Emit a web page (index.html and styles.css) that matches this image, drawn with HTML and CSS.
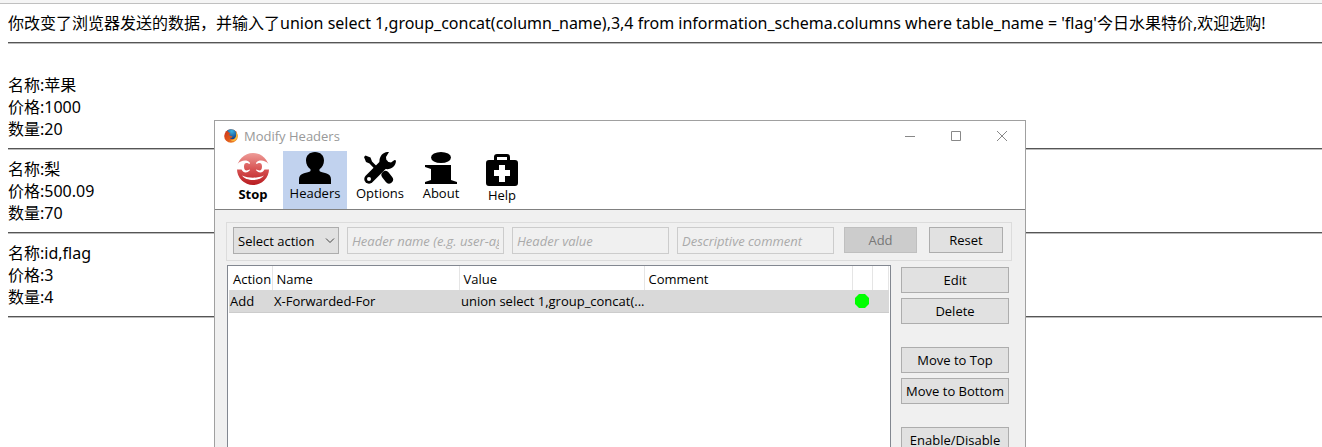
FILE: index.html
```html
<!DOCTYPE html>
<html lang="zh-CN">
<head>
<meta charset="utf-8">
<title>Modify Headers</title>
<link rel="stylesheet" href="styles.css">
</head>
<body>
<main class="page">
  <p class="line">你改变了浏览器发送的数据，并输入了<span class="query">union select 1,group_concat(column_name),3,4 from information_schema.columns where table_name = 'flag'</span>今日水果特价,欢迎选购!</p>
  <hr class="rule">
  <section class="item first">
    <p class="line">名称:苹果</p>
    <p class="line">价格:1000</p>
    <p class="line">数量:20</p>
  </section>
  <hr class="rule">
  <section class="item">
    <p class="line">名称:梨</p>
    <p class="line">价格:500.09</p>
    <p class="line">数量:70</p>
  </section>
  <hr class="rule">
  <section class="item">
    <p class="line">名称:id,flag</p>
    <p class="line">价格:3</p>
    <p class="line">数量:4</p>
  </section>
  <hr class="rule">
</main>

<div class="window" role="dialog" aria-labelledby="window-title">
  <header class="titlebar">
    <svg class="logo" viewBox="0 0 16 16" aria-hidden="true">
      <defs>
        <linearGradient id="fox" x1="0" y1="0" x2="1" y2="1">
          <stop offset="0" stop-color="#c8301c"/><stop offset=".55" stop-color="#e05a1c"/><stop offset="1" stop-color="#f8a030"/>
        </linearGradient>
        <radialGradient id="globe" cx=".5" cy=".2" r=".8">
          <stop offset="0" stop-color="#38b4e4"/><stop offset="1" stop-color="#123c80"/>
        </radialGradient>
      </defs>
      <circle cx="8" cy="8" r="7.8" fill="url(#fox)"/>
      <path d="M3.500 2C6-.3 11-.5 13.500 3c1.500 2.500 1 6.500-1.500 8-2 1-4.500.5-5.500-1 2 .5 3-.5 3.200-1.500L7 7.800 5.500 6.500 7.500 5 5 3.500Z" fill="url(#globe)"/>
      <path d="M13.500 3C15 7.500 13 12.500 7.500 13c3 1.800 7 .2 7.900-3.500C16 7 15 4.500 13.500 3Z" fill="#f9bd3c"/>
    </svg>
    <h1 class="title" id="window-title">Modify Headers</h1>
    <div class="controls">
      <button class="control" aria-label="Minimize"><svg viewBox="0 0 10 10"><path d="M0 5.500H10"/></svg></button>
      <button class="control" aria-label="Maximize"><svg viewBox="0 0 10 10"><path d="M.5.5h9v9h-9z"/></svg></button>
      <button class="control" aria-label="Close"><svg viewBox="0 0 10 10"><path d="M0 0 10 10M10 0 0 10"/></svg></button>
    </div>
  </header>

  <nav class="toolbar">
    <button class="tool stop">
      <svg class="icon" viewBox="0 0 32 32" aria-hidden="true">
        <defs><linearGradient id="red" gradientUnits="userSpaceOnUse" x1="0" y1="0" x2="0" y2="32"><stop offset="0" stop-color="#ee9c98"/><stop offset=".5" stop-color="#d85454"/><stop offset="1" stop-color="#b81c20"/></linearGradient></defs>
        <circle cx="16" cy="16" r="16" fill="url(#red)"/>
        <path d="M0 11.500C2.500 8.500 5 7.500 8 7.500c2 0 3.500.5 4.500 2h7c1-1.500 2.500-2 4.500-2 3 0 5.500 1 8 4v5h-4.500c-1 2-2.500 3-4 3-2 0-3-.8-4-2h-7c-1 1.200-2 2-4 2-1.500 0-3-1-4-3H0Z" fill="#fff"/>
        <path d="M7 13.500C7 11 8 10 9.500 10c1.500 0 2 .8 3.500.8V7h6v3.800c1.500 0 2-.8 3.500-.8 1.500 0 2.500 1 2.500 3.500s-1 4-2.500 4c-1.500 0-2-1-3.500-1V20h-6v-3.500c-1.500 0-2 1-3.500 1-1.500 0-2.500-1.500-2.500-4Z" fill="url(#red)"/>
        <path d="M5 22.500c7 3 15 3 22 0-4 6-18 6-22 0Z" fill="#fff"/>
      </svg>
      <span>Stop</span>
    </button>
    <button class="tool headers" aria-pressed="true">
      <svg class="icon" viewBox="0 0 32 32" aria-hidden="true"><path d="M16 0c5.500 0 9 3.500 9 8.500 0 4-2 7-4.500 8.700V19c1 1 4 1.500 6.500 2.200 3.500 1 5 3 5 6V32H0v-4.800c0-3 1.500-5 5-6C7.500 20.500 10.500 20 11.500 19v-1.800C9 15.500 7 12.500 7 8.500 7 3.500 10.500 0 16 0Z"/></svg>
      <span>Headers</span>
    </button>
    <button class="tool options">
      <svg class="icon" viewBox="0 0 32 32" aria-hidden="true">
        <path d="M0 5 1.500 3.500 6.500 5.500 8 9.500 17 18.500 14.500 21 5.500 11.500 2 10Z"/>
        <path d="M21.500 23 25 27.500" fill="none" stroke="#000" stroke-width="8" stroke-linecap="round"/>
        <path d="M5 27 20 12" fill="none" stroke="#000" stroke-width="9.500" stroke-linecap="round"/>
        <path d="M25 0C19.500-.5 15 4 15.500 10l6 7C27 18 32 14 32 8.500L30.500 8 27 10.500 22.500 9.500 22 5Z"/>
        <circle cx="5" cy="27" r="2" fill="#fff"/>
      </svg>
      <span>Options</span>
    </button>
    <button class="tool about">
      <svg class="icon" viewBox="0 0 32 32" aria-hidden="true"><ellipse cx="16" cy="5.500" rx="10" ry="5.500"/><path d="M0 13h26v15l6 2v2H0v-2l6-2V17L0 15Z"/></svg>
      <span>About</span>
    </button>
    <button class="tool help">
      <svg class="icon" viewBox="0 0 32 32" aria-hidden="true"><path fill-rule="evenodd" d="M3 6h5V3a3 3 0 0 1 3-3h10a3 3 0 0 1 3 3v3h5a3 3 0 0 1 3 3v20a3 3 0 0 1-3 3H3a3 3 0 0 1-3-3V9a3 3 0 0 1 3-3Zm8 0h10V3H11Zm2 5v5H8v6h5v6h6v-6h5v-6h-5v-5Z"/></svg>
      <span>Help</span>
    </button>
  </nav>

  <div class="body">
    <form class="entry">
      <select class="action" aria-label="Select action"><option>Select action</option></select>
      <input class="field" type="text" placeholder="Header name (e.g. user-agent)" aria-label="Header name">
      <input class="field" type="text" placeholder="Header value" aria-label="Header value">
      <input class="field" type="text" placeholder="Descriptive comment" aria-label="Descriptive comment">
      <button class="button add" type="button" disabled>Add</button>
      <button class="button reset" type="reset">Reset</button>
    </form>
    <div class="content">
      <div class="list">
        <table class="table">
          <colgroup><col class="c-action"><col class="c-name"><col class="c-value"><col><col class="c-state"><col class="c-picker"></colgroup>
          <thead><tr><th>Action</th><th>Name</th><th>Value</th><th>Comment</th><th></th><th></th></tr></thead>
          <tbody><tr><td>Add</td><td>X-Forwarded-For</td><td>union select 1,group_concat(...</td><td></td><td><svg class="dot" viewBox="0 0 14 14" role="img" aria-label="Enabled"><path d="M4 0h6l4 4v6l-4 4H4l-4-4V4Z"/></svg></td><td></td></tr></tbody>
        </table>
      </div>
      <div class="side">
        <div class="group"><button class="button">Edit</button><button class="button">Delete</button></div>
        <div class="group"><button class="button">Move to Top</button><button class="button">Move to Bottom</button></div>
        <div class="group"><button class="button">Enable/Disable</button></div>
      </div>
    </div>
  </div>
</div>
</body>
</html>
```

FILE: styles.css
```css
* { box-sizing: border-box; }

body {
  margin: 0;
  min-height: 100vh;
  overflow: hidden;
  position: relative;
  background: #fff;
  color: #000;
  font-family: "Open Sans", "Noto Sans CJK SC", sans-serif;
}

button, input, select { font: inherit; color: inherit; }

.page {
  border-top: 3px solid #f5f5f5;
  box-shadow: inset 0 1px #c0c0c0;
  padding: 9px 0 0 8px;
  font-family: "Noto Sans", "Noto Sans CJK SC", sans-serif;
  font-size: 16px;
}

.line { margin: 0; line-height: 22px; white-space: nowrap; }
.rule {
  height: 2px;
  margin: 8px 0;
  border: 0;
  border-top: 1px solid #555;
  border-bottom: 1px solid #bbb;
}
.first { padding-top: 22px; }

.window {
  position: absolute;
  top: 120px;
  bottom: 0;
  left: 214px;
  right: 296px;
  overflow: hidden;
  display: flex;
  flex-direction: column;
  background: #fff;
  border: 1px solid #a0a0a0;
  border-bottom: 0;
  font-size: 13px;
  line-height: 18px;
}

.titlebar { display: flex; align-items: center; height: 30px; padding-left: 9px; flex: none; }
.logo { width: 14px; height: 14px; }
.title { margin: 0 0 0 6px; font-size: 13px; font-weight: 400; color: #999; }
.controls { display: flex; margin-left: auto; }
.control { width: 46px; height: 28px; padding: 0; border: 0; background: none; }
.control svg { display: block; width: 10px; height: 10px; margin: auto; fill: none; stroke: #888; }

.toolbar {
  display: flex;
  align-items: flex-start;
  flex: none;
  height: 59px;
  padding-left: 8px;
  border-bottom: 1px solid #808080;
}
.tool {
  display: flex;
  flex-direction: column;
  align-items: center;
  height: 58px;
  padding: 1px 0 0;
  border: 0;
  background: none;
}
.icon { width: 32px; height: 32px; flex: none; }
.stop { width: 60px; padding-top: 2px; font-weight: 700; }
.headers { width: 64px; background: #c1d2ee; }
.options { width: 66px; }
.about { width: 56px; }
.help { width: 66px; padding-top: 3px; }

.body { flex: 1 0 auto; padding: 12px 13px 0 11px; background: #f0f0f0; }
.entry {
  display: flex;
  gap: 8px;
  align-items: flex-start;
  padding: 4px 8px 6px 6px;
  border: 1px solid #dcdcdc;
}
.action, .field { height: 27px; border: 1px solid #adadad; border-radius: 0; }
.action {
  appearance: none;
  width: 106px;
  padding: 0 4px;
  background: #e1e1e1 url("data:image/svg+xml,%3Csvg xmlns='http://www.w3.org/2000/svg' width='10' height='6'%3E%3Cpath d='M1 .5 5 4.500 9 .5' fill='none' stroke='%23444'/%3E%3C/svg%3E") no-repeat right 3px center;
}
.field { flex: 1; min-width: 0; padding: 0 4px; background: #f0f0f0; border-color: #ccc; }
.field::placeholder { color: #aaa; font-style: italic; opacity: 1; }

.button {
  height: 26px;
  padding: 0;
  background: #e1e1e1;
  border: 1px solid #adadad;
  white-space: nowrap;
}
.add { width: 73px; margin: 0 4px 0 2px; background: #ccc; border-color: #bfbfbf; color: #777; }
.reset { width: 74px; }

.content { display: flex; gap: 10px; padding: 4px 3px 0 1px; }
.list {
  flex: 1;
  min-height: 240px;
  padding: 0 1px;
  background: #fff;
  border: 1px solid #828790;
}
.table { width: 100%; table-layout: fixed; border-collapse: collapse; }
.c-action { width: 43px; }
.c-name { width: 187px; }
.c-value { width: 185px; }
.c-state { width: 20px; }
.c-picker { width: 16px; }
.table th {
  height: 24px;
  padding: 2px 0 0 4px;
  border-right: 1px solid #e5e5e5;
  font-weight: 400;
  text-align: left;
  white-space: nowrap;
}
.table td {
  height: 22px;
  padding: 0 0 0 2px;
  background: #d9d9d9;
  border-bottom: 1px solid #ccc;
  white-space: nowrap;
}
.table td:first-child { padding-left: 1px; }
.dot { display: block; width: 14px; height: 14px; fill: #0f0; }

.side { display: flex; flex-direction: column; gap: 23px; width: 108px; padding-top: 2px; }
.group { display: flex; flex-direction: column; gap: 5px; }
```
